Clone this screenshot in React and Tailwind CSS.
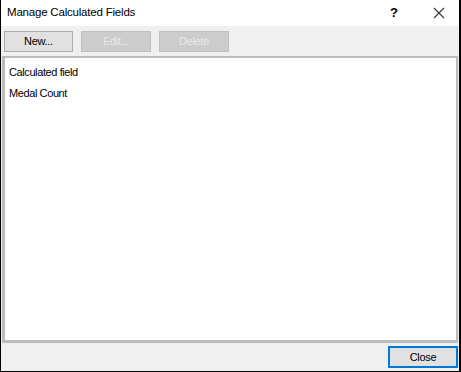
export default function App() {
  const font = { fontFamily: '"Liberation Sans", Arial, sans-serif' };
  return (
    <div className="w-[461px] h-[372px] flex flex-col bg-[#f0f0f0] border-l border-r-2 border-b border-black text-[11px] text-black" style={font}>
      <div className="h-[26px] shrink-0 bg-white flex items-center pl-[6px]">
        <span className="flex-1 text-[11.5px] tracking-[-0.2px]">Manage Calculated Fields</span>
        <span className="w-[14px] text-center font-semibold text-[13px] mr-[32px]">?</span>
        <svg width="12" height="12" viewBox="0 0 12 12" className="mr-[14px]">
          <path d="M1 1 L11 11 M11 1 L1 11" stroke="#333" strokeWidth="1.1" />
        </svg>
      </div>
      <div className="h-[30px] shrink-0 flex items-center gap-[8px] pl-[3px] tracking-[-0.3px]">
        <button className="w-[69px] h-[21px] bg-[#e1e1e1] border border-[#adadad] leading-none">New...</button>
        <button className="w-[70px] h-[21px] bg-[#cccccc] border border-[#bfbfbf] text-[#e8e8e8] leading-none">Edit...</button>
        <button className="w-[70px] h-[21px] bg-[#cccccc] border border-[#bfbfbf] text-[#e8e8e8] leading-none">Delete</button>
      </div>
      <div className="flex-1 mx-[1px] bg-white border-t-2 border-l-[3px] border-r-2 border-b-[3px] border-[#bcbcbc] pl-[4px] pt-[8px] flex flex-col gap-[8px] tracking-[-0.4px] leading-[13px]">
        <div>Calculated field</div>
        <div>Medal Count</div>
      </div>
      <div className="h-[28px] shrink-0 flex items-center justify-end pr-[1px] tracking-[-0.3px]">
        <button className="w-[70px] h-[22px] bg-[#e1e1e1] border-2 border-[#0078d7] leading-none">Close</button>
      </div>
    </div>
  );
}
